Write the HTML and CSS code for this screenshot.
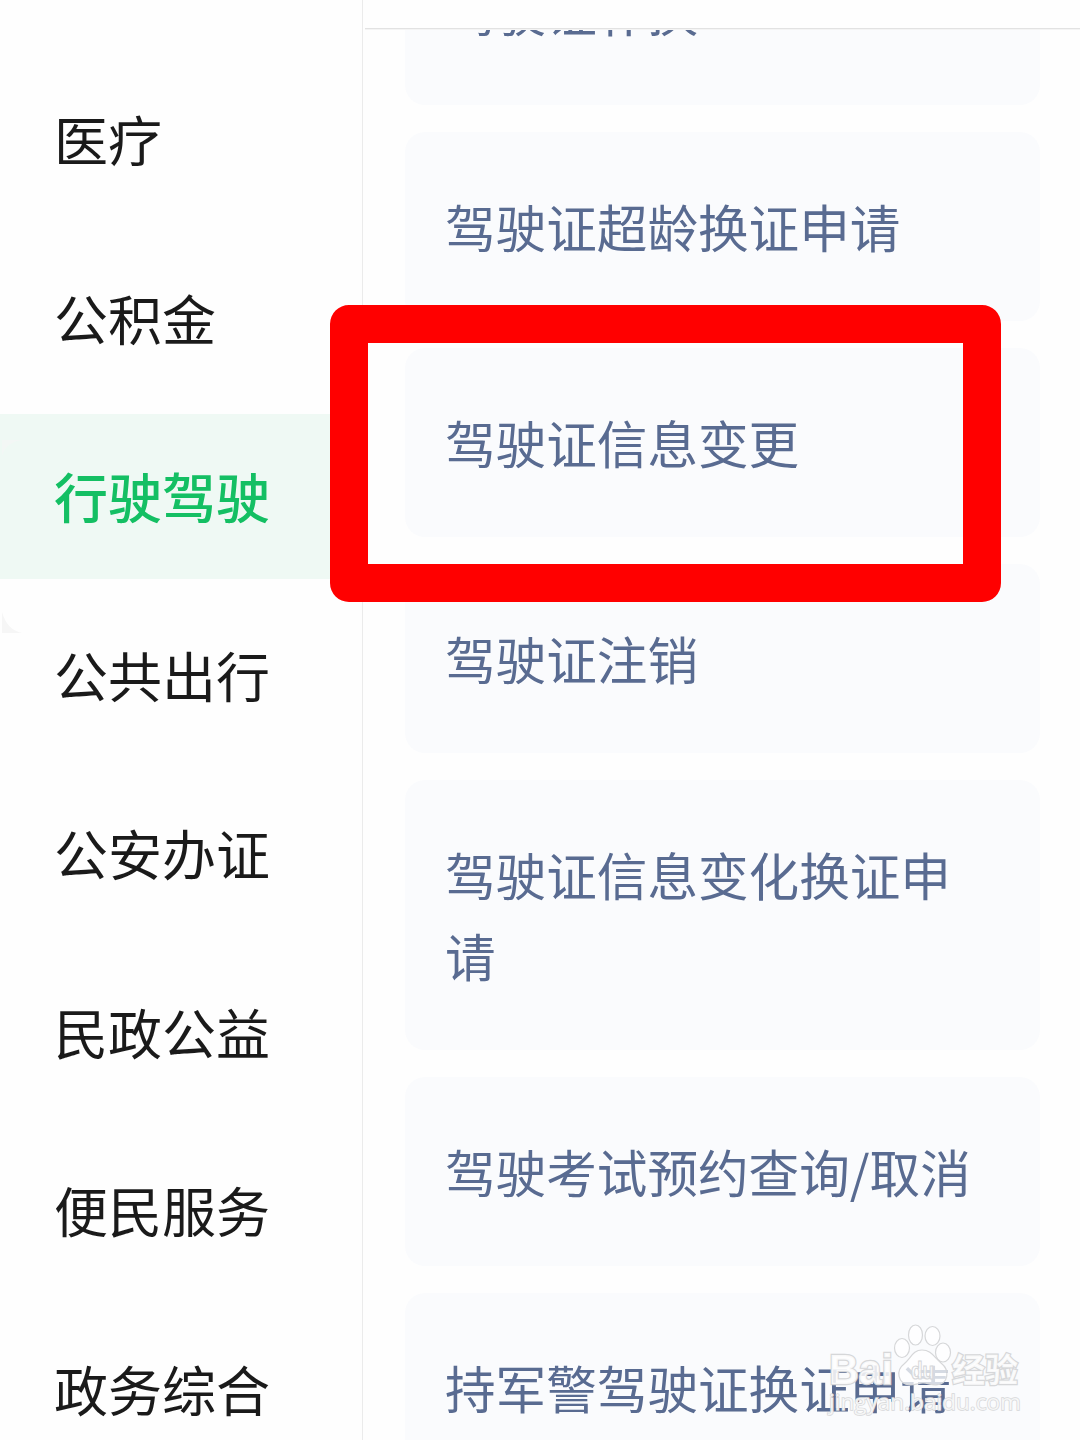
FILE: index.html
```html
<!DOCTYPE html>
<html lang="zh-CN">
<head>
    <meta charset="UTF-8">
    <meta name="viewport" content="width=device-width, initial-scale=1.0">
    <title>城市服务</title>
    <link rel="stylesheet" href="styles.css">
</head>
<body>
    <div class="page">
        <nav class="sidebar">
            <a class="menu-item">医疗</a>
            <a class="menu-item">公积金</a>
            <a class="menu-item active">行驶驾驶</a>
            <a class="menu-item">公共出行</a>
            <a class="menu-item">公安办证</a>
            <a class="menu-item">民政公益</a>
            <a class="menu-item">便民服务</a>
            <a class="menu-item">政务综合</a>
        </nav>
        <main class="content">
            <div class="top-bar"></div>
            <div class="service-list">
                <div class="card">驾驶证补换</div>
                <div class="card">驾驶证超龄换证申请</div>
                <div class="card">驾驶证信息变更</div>
                <div class="card">驾驶证注销</div>
                <div class="card">驾驶证信息变化换证申请</div>
                <div class="card">驾驶考试预约查询/取消</div>
                <div class="card">持军警驾驶证换证申请</div>
            </div>
        </main>

        <svg class="corner" width="22" height="194" viewBox="0 0 22 194">
            <path class="corner-top" d="M0 0H20Q4 2 0 16Z"/>
            <path class="corner-bottom" d="M0 172Q5 190 20 193H0Z"/>
        </svg>
        <div class="highlight"></div>
        <svg class="watermark" width="210" height="104" viewBox="820 1320 210 104">
            <text class="wm-bold" x="829" y="1384" font-size="42" textLength="64" lengthAdjust="spacingAndGlyphs">Bai</text>
            <ellipse cx="902" cy="1348" rx="7.5" ry="9.5"/>
            <ellipse cx="915.5" cy="1335" rx="7" ry="10"/>
            <ellipse cx="932.5" cy="1336" rx="7.5" ry="9.5"/>
            <ellipse cx="943" cy="1352.5" rx="7.5" ry="9.5"/>
            <path d="M922 1350C913 1350 911 1358 904 1364C896 1370 897 1384 910 1385C917 1385 918 1383 923 1383C928 1383 930 1385 936 1385C949 1384 950 1370 941 1363C934 1357 931 1350 922 1350Z"/>
            <text class="wm-du" x="911" y="1379" font-size="24" textLength="23" lengthAdjust="spacingAndGlyphs">du</text>
            <text class="wm-bold" x="952" y="1382" font-size="33">经验</text>
            <text class="wm-url" x="829" y="1410" font-size="22" textLength="192" lengthAdjust="spacingAndGlyphs">jingyan.baidu.com</text>
        </svg>
    </div>
</body>
</html>
```
FILE: styles.css
```css
body {
    margin: 0;
    font-family: "Noto Sans CJK SC", sans-serif;
    background: #fefefe;
    overflow: hidden;
}
.page {
    position: relative;
    display: flex;
    height: 1440px;
    overflow: hidden;
}
.sidebar {
    display: flex;
    flex-direction: column;
    gap: 13.5px;
    box-sizing: border-box;
    width: 363px;
    padding-top: 57px;
    border-right: 1px solid #ebebeb;
    flex-shrink: 0;
}
.menu-item {
    flex-shrink: 0;
    height: 165px;
    padding-left: 54px;
    line-height: 164px;
    font-size: 54px;
    color: #1a1a1a;
    white-space: nowrap;
}
.menu-item.active {
    background: #eff9f4;
    color: #14bf63;
    font-weight: 500;
}
.content {
    display: flex;
    flex-direction: column;
    flex: 1;
    min-width: 0;
}
.top-bar {
    position: relative;
    height: 28px;
    margin-left: 2px;
    border-bottom: 1px solid #e2e2e2;
    box-shadow: 0 1px 0 #f4f4f4;
    flex-shrink: 0;
}
.service-list {
    flex: 1;
    min-height: 0;
    padding: 0 40px 0 42px;
    overflow: hidden;
}
.card {
    box-sizing: border-box;
    margin-bottom: 27px;
    padding: 54px 40px 54px;
    border-radius: 20px;
    background: #fafbfd;
    color: #596b91;
    font-size: 50.6px;
    line-height: 81px;
}
/* list is scrolled past the first card */
.card:first-child {
    margin-top: -113px;
}
.corner {
    position: absolute;
    left: 2px;
    top: 440px;
}
.corner-top {
    fill: #f3f7f5;
}
.corner-bottom {
    fill: #f6f6f6;
}
.highlight {
    position: absolute;
    left: 330px;
    top: 305px;
    box-sizing: border-box;
    width: 671px;
    height: 297px;
    border: 38px solid #ff0000;
    border-radius: 19px;
}
.watermark {
    position: absolute;
    left: 820px;
    top: 1320px;
    fill: rgba(255, 255, 255, 0.75);
    stroke: #d6d7d9;
    stroke-width: 1.2;
}
.wm-bold {
    font-family: "Liberation Sans", "Noto Sans CJK SC", sans-serif;
    font-weight: bold;
    stroke-width: 2.4;
    paint-order: stroke;
    fill: rgba(255, 255, 255, 0.85);
}
.wm-du {
    font-family: "Liberation Sans", sans-serif;
    font-weight: bold;
}
.wm-url {
    font-family: "Open Sans", sans-serif;
    stroke-width: 1.4;
    paint-order: stroke;
}
```
